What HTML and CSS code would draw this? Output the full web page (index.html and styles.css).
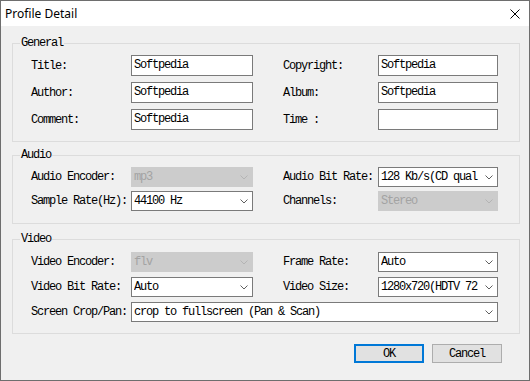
FILE: index.html
```html
<!DOCTYPE html>
<html lang="en">
<head>
    <meta charset="UTF-8">
    <title>Profile Detail</title>
    <link rel="stylesheet" href="styles.css">
</head>
<body>

<div class="window">
    <div class="titlebar">
        <span class="title">Profile Detail</span>
        <svg class="close" width="10" height="10" viewBox="0 0 10 10">
            <path d="M0.5 0.5 L9.5 9.5 M9.5 0.5 L0.5 9.5" stroke="#000" stroke-width="1" fill="none"/>
        </svg>
    </div>

    <div class="client">
        <fieldset class="group general">
            <legend>General</legend>
            <div class="grid">
                <label>Title:</label>
                <div class="edit">Softpedia</div>
                <label class="right">Copyright:</label>
                <div class="edit">Softpedia</div>

                <label>Author:</label>
                <div class="edit">Softpedia</div>
                <label class="right">Album:</label>
                <div class="edit">Softpedia</div>

                <label>Comment:</label>
                <div class="edit">Softpedia</div>
                <label class="right">Time :</label>
                <div class="edit"></div>
            </div>
        </fieldset>

        <fieldset class="group audio">
            <legend>Audio</legend>
            <div class="grid">
                <label>Audio Encoder:</label>
                <div class="combo disabled"><span>mp3</span><svg class="arrow" width="8" height="5" viewBox="0 0 8 5"><path d="M0.5 0.5 L4 4 L7.5 0.5" fill="none" stroke-width="1"/></svg></div>
                <label class="right">Audio Bit Rate:</label>
                <div class="combo"><span>128 Kb/s(CD qual</span><svg class="arrow" width="8" height="5" viewBox="0 0 8 5"><path d="M0.5 0.5 L4 4 L7.5 0.5" fill="none" stroke-width="1"/></svg></div>

                <label>Sample Rate(Hz):</label>
                <div class="combo"><span>44100 Hz</span><svg class="arrow" width="8" height="5" viewBox="0 0 8 5"><path d="M0.5 0.5 L4 4 L7.5 0.5" fill="none" stroke-width="1"/></svg></div>
                <label class="right">Channels:</label>
                <div class="combo disabled"><span>Stereo</span><svg class="arrow" width="8" height="5" viewBox="0 0 8 5"><path d="M0.5 0.5 L4 4 L7.5 0.5" fill="none" stroke-width="1"/></svg></div>
            </div>
        </fieldset>

        <fieldset class="group video">
            <legend>Video</legend>
            <div class="grid">
                <label>Video Encoder:</label>
                <div class="combo disabled"><span>flv</span><svg class="arrow" width="8" height="5" viewBox="0 0 8 5"><path d="M0.5 0.5 L4 4 L7.5 0.5" fill="none" stroke-width="1"/></svg></div>
                <label class="right">Frame Rate:</label>
                <div class="combo"><span>Auto</span><svg class="arrow" width="8" height="5" viewBox="0 0 8 5"><path d="M0.5 0.5 L4 4 L7.5 0.5" fill="none" stroke-width="1"/></svg></div>

                <label>Video Bit Rate:</label>
                <div class="combo"><span>Auto</span><svg class="arrow" width="8" height="5" viewBox="0 0 8 5"><path d="M0.5 0.5 L4 4 L7.5 0.5" fill="none" stroke-width="1"/></svg></div>
                <label class="right">Video Size:</label>
                <div class="combo"><span>1280x720(HDTV 72</span><svg class="arrow" width="8" height="5" viewBox="0 0 8 5"><path d="M0.5 0.5 L4 4 L7.5 0.5" fill="none" stroke-width="1"/></svg></div>

                <label>Screen Crop/Pan:</label>
                <div class="combo wide"><span>crop to fullscreen (Pan &amp; Scan)</span><svg class="arrow" width="8" height="5" viewBox="0 0 8 5"><path d="M0.5 0.5 L4 4 L7.5 0.5" fill="none" stroke-width="1"/></svg></div>
            </div>
        </fieldset>

        <div class="buttons">
            <button class="btn default">OK</button>
            <button class="btn">Cancel</button>
        </div>
    </div>
</div>

</body>
</html>
```

FILE: styles.css
```css
body {
    margin: 0;
    background: #ffffff;
}
.window {
    width: 530px;
    height: 381px;
    box-sizing: border-box;
    border: 1px solid #6e6e6e;
    display: flex;
    flex-direction: column;
    font-family: "Liberation Mono", monospace;
    font-size: 12px;
    letter-spacing: -1.2px;
    color: #000;
}
.titlebar {
    height: 25px;
    background: #ffffff;
    display: flex;
    align-items: center;
    justify-content: space-between;
    padding-left: 4px;
}
.title {
    font-family: "Noto Sans", sans-serif;
    font-size: 12px;
    letter-spacing: 0;
}
.close {
    margin-right: 9px;
}
.client {
    flex: 1;
    background: #f0f0f0;
    display: flex;
    flex-direction: column;
}
.group {
    box-sizing: border-box;
    width: 508px;
    margin: 0 0 0 11px;
    padding: 0;
    border: 1px solid #dcdcdc;
}
.group legend {
    margin-left: 7px;
    padding: 0 1px;
    line-height: 14px;
}
.general {
    margin-top: 10px;
    height: 106px;
    padding-top: 5px;
}
.audio {
    margin-top: 6px;
    height: 76px;
    padding-top: 5px;
}
.video {
    margin-top: 8px;
    height: 102px;
    padding-top: 6px;
}
.grid {
    display: grid;
    grid-template-columns: 100px 122px 30px 95px 120px;
    margin-left: 18px;
    align-items: center;
}
.general .grid {
    grid-auto-rows: 21px;
    row-gap: 6px;
}
.audio .grid {
    grid-auto-rows: 20px;
    row-gap: 4px;
}
.video .grid {
    grid-auto-rows: 20px;
    row-gap: 5px;
}
label {
    white-space: nowrap;
}
.right {
    grid-column: 4;
}
.edit {
    box-sizing: border-box;
    height: 100%;
    background: #ffffff;
    border: 1px solid #7a7a7a;
    padding: 1px 0 0 2px;
    line-height: 16px;
    white-space: nowrap;
}
.combo {
    box-sizing: border-box;
    height: 100%;
    background: #ffffff;
    border: 1px solid #7a7a7a;
    display: flex;
    align-items: center;
    padding-left: 2px;
    overflow: hidden;
}
.combo span {
    flex: 1;
    overflow: hidden;
    white-space: nowrap;
}
.combo .arrow {
    flex: none;
    margin: 0 4px 0 3px;
    stroke: #606060;
}
.combo.disabled {
    background: #cccccc;
    border-color: #cccccc;
    color: #a3a3a3;
}
.combo.disabled .arrow {
    stroke: #b4b4b4;
}
.combo.wide {
    grid-column: 2 / 6;
}
.buttons {
    display: flex;
    justify-content: flex-end;
    gap: 8px;
    margin-top: 10px;
    padding-right: 27px;
}
.btn {
    box-sizing: border-box;
    width: 70px;
    height: 19px;
    padding: 0;
    background: #e1e1e1;
    border: 1px solid #adadad;
    font-family: "Liberation Mono", monospace;
    font-size: 12px;
    letter-spacing: -1.2px;
    color: #000;
}
.btn.default {
    border: 2px solid #0078d7;
}
```
